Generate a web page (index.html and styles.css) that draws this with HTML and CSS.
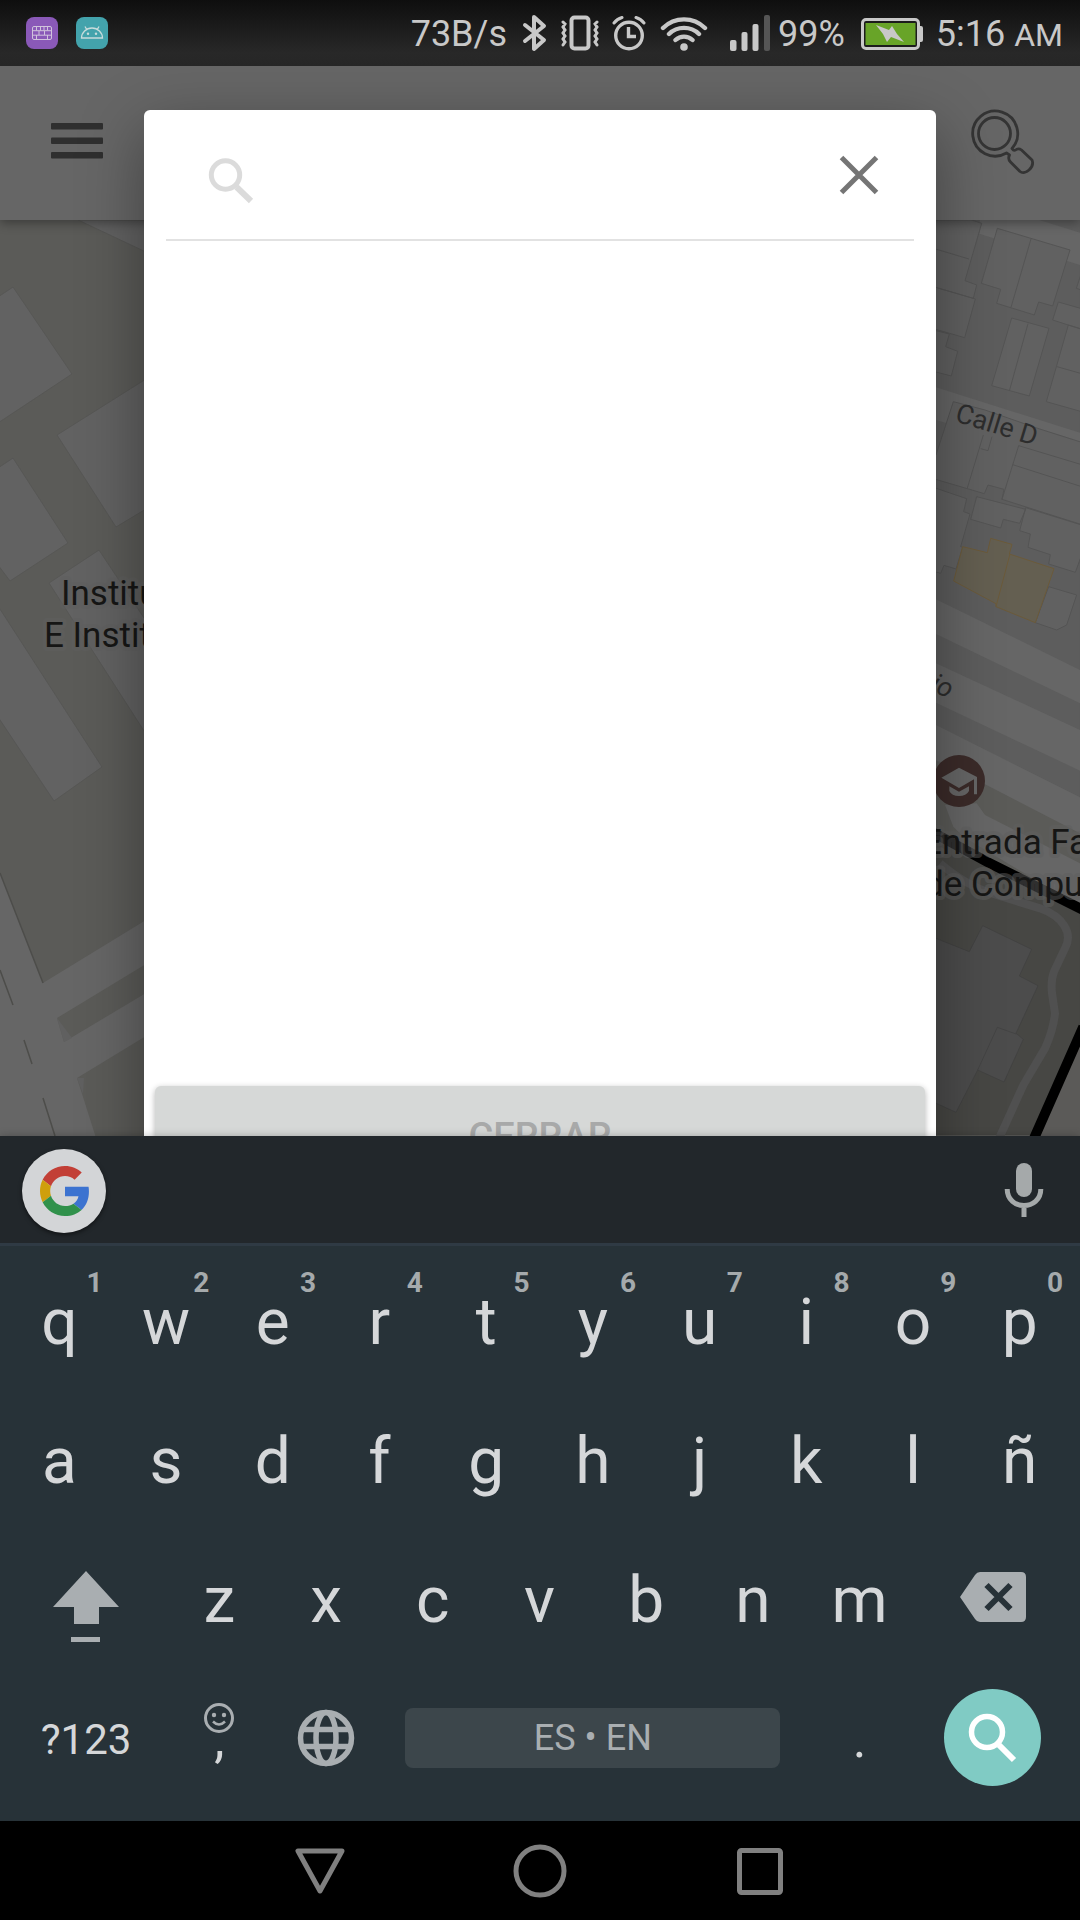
FILE: index.html
```html
<!DOCTYPE html>
<html lang="es">
<head>
<meta charset="utf-8">
<meta name="viewport" content="width=device-width, initial-scale=1">
<title>Buscar</title>
<link rel="stylesheet" href="styles.css">
</head>
<body>
<header class="status">
  <div class="status-apps">
    <svg width="32" height="32" viewBox="0 0 32 32"><rect width="32" height="32" rx="8" fill="#8a59b8"/><g fill="none" stroke="#d0c3dc" stroke-width="1"><rect x="6.500" y="9.500" width="19" height="13" rx="1.500"/><path d="M6.500 13.700h19M6.500 18.200h19M10.500 9.500v4M14.500 9.500v4M18 9.500v4M21.500 9.500v4M13 14v4M18.500 14v4M10.500 18v4M21.500 18v4"/></g></svg>
    <svg width="32" height="32" viewBox="0 0 32 32"><rect width="32" height="32" rx="8" fill="#43a3ac"/><path d="M5.500 21a10.500 10 0 0 1 21 0zM9 9.500l2 3.500M23 9.500l-2 3.500" fill="none" stroke="#c8dcdc" stroke-width="1.300"/><g fill="#c8dcdc"><circle cx="12" cy="16.800" r="1.200"/><circle cx="20" cy="16.800" r="1.200"/></g></svg>
  </div>
  <div class="status-info">
    <span>73B/s</span>
    <svg class="i-bt" width="26" height="38" viewBox="0 0 26 38" fill="none" stroke="#c8c8c8" stroke-width="4" stroke-linejoin="round" stroke-linecap="round"><path d="M3 11l19 15-10 9V3l10 9L3 27"/></svg>
    <svg class="i-vib" width="38" height="36" viewBox="0 0 38 36" fill="none" stroke="#c8c8c8" stroke-linecap="round"><rect x="10.500" y="2.500" width="17" height="31" rx="3" stroke-width="4"/><path stroke-width="3" d="M2 7l2 2-2 3 2 3-2 3 2 3-2 3 2 3-2 3M36 7l-2 2 2 3-2 3 2 3-2 3 2 3-2 3 2 3"/></svg>
    <svg class="i-alarm" width="34" height="36" viewBox="0 0 34 36" fill="none" stroke="#c8c8c8" stroke-linecap="round"><circle cx="17" cy="20.500" r="13.300" stroke-width="3.400"/><path stroke-width="3.400" stroke-linecap="butt" d="M16.500 12v9.500H24"/><path stroke-width="3" d="M2 8q3-4 8-5.500M32 8q-3-4-8-5.500"/></svg>
    <svg class="i-wifi" width="48" height="38" viewBox="0 0 48 38" fill="none" stroke="#c8c8c8" stroke-width="4.400" stroke-linecap="round"><path d="M3 14a30 30 0 0 1 42 0M9 20a21.500 21.500 0 0 1 30 0M15.500 26a12.500 12.500 0 0 1 17 0"/><circle cx="24" cy="33" r="3.800" fill="#c8c8c8" stroke="none"/></svg>
    <svg class="i-sig" width="40" height="36" viewBox="0 0 40 36" fill="#c8c8c8"><rect y="25" width="6.500" height="11" rx="2"/><rect x="11.500" y="17" width="6" height="19" rx="2"/><rect x="22.500" y="9" width="6" height="27" rx="2"/><rect x="34" width="6" height="36" rx="2" fill="#555"/></svg>
    <span>99%</span>
    <svg class="i-bat" width="62" height="32" viewBox="0 0 62 32"><rect x="1.500" y="1.500" width="56" height="29" rx="3.500" fill="#1c1c1c" stroke="#c8c8c8" stroke-width="3"/><path d="M58 8h2q2 0 2 2v12q0 2-2 2h-2z" fill="#c8c8c8"/><rect x="4.500" y="5" width="50" height="22" fill="#68a428"/><path d="M15 7l13 5 3-4 5 8 7 8-13-5-4 5-4-8z" fill="#c8c8c8"/></svg>
    <span>5:16 <span class="ampm">AM</span></span>
  </div>
</header>

<main class="app">
  <div class="toolbar">
    <button class="plain" aria-label="Menú"><svg width="52" height="36" viewBox="0 0 52 36" fill="#2f2f2f"><rect width="52" height="6.500" rx="1"/><rect y="14.500" width="52" height="6.500" rx="1"/><rect y="29" width="52" height="6.500" rx="1"/></svg></button>
    <button class="plain" aria-label="Buscar lugar"><svg width="66" height="66" viewBox="0 0 66 66" fill="none" stroke="#343434" stroke-width="2.800" stroke-linejoin="round"><circle cx="23.500" cy="25.500" r="16"/><path d="M41 40.500a22.500 22.500 0 1 0-5.500 4.500l3 2c-1 2-1 5 1 7l9.500 9.500c5 4 15-4 12-11.500L50.500 42c-2-1.500-4-1.500-6 0-2 1-2.500 0-3.500-1.500z"/></svg></button>
  </div>

  <svg class="map" viewBox="0 220 1080 916" preserveAspectRatio="xMidYMin slice">
    <rect y="220" width="1080" height="916" fill="#5b5b58"/>
    <g fill="#626262" stroke="#575755" stroke-width="1">
      <path d="M78 220h70v33z"/>
      <path d="M-2 297l15-10 59 87-74 49zM-2 468l15-10 55 85-58 38-12-16zM57 435l89-56v130l-30 18zM49 583l50-33 47 71v113zM-2 606l104 161-48 34-56-84z"/>
    </g>
    <path fill="#666" d="M0 873l43 110 103-63v44l-89 54 7 24 82-49v43l-69 42 19 60H0z"/>
    <path fill="#606060" d="M57 1018l15 20-8 4zM77 1078h7l-1 16z"/>
    <path d="M0 873l43 110M0 970l13 35M24 1040l8 24M43 1098l12 38" fill="none" stroke="#4d4d4a" stroke-width="1.500"/>

    <g transform="translate(920 210) scale(.33333)">
      <path fill="#5d5d5d" d="M40 0h440v1860L40 1650z"/>
      <g fill="#666">
        <path d="M180 30h178l122 38v97L178 71zM48 532l432 136v90L48 630z"/>
        <path d="M48 1168l432 212v100L48 1272zM48 1360l432 200v122L48 1478zM48 1545l432 217v108L200 1725 48 1650z"/>
        <path d="M75 1785l95-5 25 35 285 145v130L130 1880l-30-30z"/>
      </g>
      <g fill="#616161" stroke="#545454" stroke-width="3">
        <path d="M40 30h115l30 10-50 172 35 13-10 40L40 230zM40 115l107 32M40 230l126 37-32 116-94-27zM88 372l-11 38 36 14-19 74-54-14V360z"/>
        <path d="M232 55l218 65-52 168-42-12-13 39-113-35 12-42-58-18zM333 87l-60 205M484 190l-15 45 15 5M415 276l70 20v62l-87-28zM275 324l112 31-59 203-113-31zM324 341l-56 202M445 345l40 12v248l-106-30zM411 470l74 21"/>
        <path d="M100 575l95 25 158 55 132 42v247L246 868l6-30-48-13-11 26L40 806v-61l8-10zM190 675l-48 159M216 680l-12 42-22-6M296 707l-50 161"/>
        <path fill="none" d="M296 707l189 57M278 764l207 66"/>
        <path d="M40 832l100 34-9 39 19 7-28 98 6 2-20 65-36-11-10 24-22-6zM170 860l147 38-18 42-49-12-8 26-90-26zM317 893l168 52v90l-19 52-80-25 5-28-67-22 7-40-32-10zM386 1130l84 25-30 90-30 15-64-22z"/>
        <path fill="#645f51" stroke="#6b5a3a" d="M128 1010l74 18 10-43 64 18-8 29 134 44-56 162-118-48v-9l-127-68zM270 1032l-42 158"/>
      </g>
      <path fill="#474744" d="M40 1860l440 235v680H40z"/>
      <path fill="#5b5a58" d="M480 2460v330H340z"/>
      <path fill="none" stroke="#505050" stroke-width="24" d="M60 1960Q140 2030 230 2055L360 2095C430 2120 460 2170 435 2215L402 2285Q392 2310 396 2350L405 2410Q400 2460 375 2515L310 2625 235 2790"/>
      <path fill="#4c4c4c" stroke="#404040" stroke-width="2" d="M40 2182l108 43 40-78 147 71-37 80 56 29-66 143 22 18-58 128-79-36-65 127-68-31zM173 2580l59-128 56 20"/>
      <path d="M40 1868L200 1955l290 145M490 2450L340 2790" fill="none" stroke="#000" stroke-width="30"/>
      <circle cx="117" cy="1713" r="78" fill="#3b2b29"/>
      <g fill="#666"><path d="M64 1703l53-30 54 28v52h-9v-45l-45 26z"/><path d="M88 1729l29 16 30-16v14q-8 15-30 15t-29-15z"/></g>
    </g>

    <g class="place">
      <text x="61" y="605">Instituto</text>
      <text x="44" y="647">E Instituto</text>
      <text x="922" y="854">Entrada Fac</text>
      <text x="924" y="896">de Comput</text>
    </g>
    <g class="street">
      <text transform="translate(954 421) rotate(17)">Calle D</text>
      <text class="slant" transform="translate(929 690) rotate(24)">io</text>
    </g>
  </svg>

  <div class="overlay">
    <section class="dialog" role="dialog" aria-label="Buscar">
      <div class="search">
        <label for="q"><svg width="48" height="48" viewBox="0 0 48 48" fill="none" stroke="#dbdbdb" stroke-width="5"><circle cx="18.500" cy="18" r="14.200"/><path stroke-width="6" d="M29.500 30L44 44"/></svg></label>
        <input id="q" type="text" aria-label="Buscar">
        <button class="plain" aria-label="Borrar"><svg width="40" height="40" viewBox="0 0 40 40" fill="none" stroke="#757575" stroke-width="5"><path d="M2.500 2.500l35 35M37.500 2.500l-35 35"/></svg></button>
      </div>
      <button class="close">CERRAR</button>
    </section>
  </div>
</main>

<section class="keyboard" aria-label="Teclado">
  <div class="suggest">
    <button class="google" aria-label="Google"><svg width="50" height="50" viewBox="0 0 48 48"><path fill="#c23f36" d="M24 9.500c3.540 0 6.710 1.220 9.210 3.600l6.850-6.850C35.900 2.380 30.470 0 24 0 14.620 0 6.510 5.380 2.560 13.220l7.980 6.190C12.430 13.720 17.740 9.500 24 9.500z"/><path fill="#3c73d0" d="M46.980 24.550c0-1.570-.15-3.090-.38-4.550H24v9.020h12.940c-.58 2.960-2.260 5.480-4.780 7.180l7.730 6c4.510-4.180 7.090-10.360 7.090-17.650z"/><path fill="#cf9f0c" d="M10.530 28.590c-.48-1.450-.76-2.990-.76-4.590s.27-3.140.76-4.590l-7.980-6.190C.92 16.460 0 20.120 0 24c0 3.880.92 7.540 2.560 10.780l7.970-6.190z"/><path fill="#30914b" d="M24 48c6.480 0 11.930-2.130 15.890-5.810l-7.730-6c-2.150 1.450-4.920 2.300-8.160 2.300-6.260 0-11.570-4.220-13.470-9.910l-7.980 6.190C6.510 42.620 14.620 48 24 48z"/></svg></button>
    <button class="plain" aria-label="Voz"><svg width="40" height="54" viewBox="0 0 40 54"><rect x="12" width="16" height="34" rx="8" fill="#a5a9aa"/><path d="M3.200 26c0 22 33.600 22 33.600 0M20 43v11" fill="none" stroke="#a5a9aa" stroke-width="5"/></svg></button>
  </div>
  <div class="keys">
    <div class="row ten">
      <button>q<small>1</small></button><button>w<small>2</small></button><button>e<small>3</small></button><button>r<small>4</small></button><button>t<small>5</small></button><button>y<small>6</small></button><button>u<small>7</small></button><button>i<small>8</small></button><button>o<small>9</small></button><button>p<small>0</small></button>
    </div>
    <div class="row ten">
      <button>a</button><button>s</button><button>d</button><button>f</button><button>g</button><button>h</button><button>j</button><button>k</button><button>l</button><button>ñ</button>
    </div>
    <div class="row nine">
      <button class="shift" aria-label="Mayúsculas"><svg width="66" height="72" viewBox="0 0 66 72" fill="#a9aeb1"><path d="M33 0l33 36H46v17H21V36H0z"/><path d="M18 66h29v5H18z"/></svg></button>
      <button>z</button><button>x</button><button>c</button><button>v</button><button>b</button><button>n</button><button>m</button>
      <button class="erase" aria-label="Retroceso"><svg width="66" height="50" viewBox="0 0 66 50"><path d="M20 0h41q5 0 5 5v40q0 5-5 5H20q-3 0-5-3L0 25 15 3q2-3 5-3z" fill="#a9aeb1"/><path d="M26.500 13l24 24M50.500 13l-24 24" stroke="#273238" stroke-width="6"/></svg></button>
    </div>
    <div class="row six">
      <button class="sym">?123</button>
      <button class="punct">,<svg class="emoji" width="32" height="32" viewBox="0 0 32 32" fill="none" stroke="#a9aeb1"><circle cx="16" cy="16" r="13.500" stroke-width="3"/><path d="M10 19.500q6 6 12 0" stroke-width="2.500"/><g fill="#a9aeb1" stroke="none"><circle cx="11" cy="13" r="2.200"/><circle cx="21" cy="13" r="2.200"/></g></svg></button>
      <button class="raised" aria-label="Idioma"><svg width="58" height="58" viewBox="0 0 58 58" fill="none" stroke="#a9aeb1" stroke-width="5.500"><circle cx="29" cy="29" r="25.500"/><ellipse cx="29" cy="29" rx="10" ry="25.500"/><path d="M4 20.500h50M4 37.500h50"/></svg></button>
      <button class="space"><span>ES • EN</span></button>
      <button class="punct">.</button>
      <button class="raised" aria-label="Buscar ahora"><span class="enter"><svg width="50" height="50" viewBox="0 0 50 50" fill="none" stroke="#fff" stroke-width="5.500"><circle cx="19" cy="19" r="15.500"/><path stroke-width="6" d="M31 32l15 15"/></svg></span></button>
    </div>
  </div>
</section>

<nav class="nav">
  <button class="plain" aria-label="Atrás"><svg width="54" height="54" viewBox="0 0 54 54"><path d="M5 7h44L27 47z"/></svg></button>
  <button class="plain" aria-label="Inicio"><svg width="54" height="54" viewBox="0 0 54 54"><circle cx="27" cy="27" r="24"/></svg></button>
  <button class="plain" aria-label="Recientes"><svg width="54" height="54" viewBox="0 0 54 54"><rect x="6.500" y="6.500" width="41" height="42" rx="2"/></svg></button>
</nav>
</body>
</html>
```

FILE: styles.css
```css
* { box-sizing: border-box; }

body {
  margin: 0;
  min-height: 100vh;
  display: flex;
  flex-direction: column;
  background: #000;
  font-family: Roboto, "Noto Sans", sans-serif;
}

svg { display: block; flex: none; }

button {
  margin: 0;
  padding: 0;
  border: 0;
  background: none;
  color: inherit;
  font: inherit;
}

.plain { display: flex; }

/* Status bar */
.status {
  display: flex;
  justify-content: space-between;
  align-items: center;
  height: 66px;
  padding: 0 17px 0 26px;
  background: linear-gradient(#0e0e0e, #1b1b1b 40%, #282828 80%, #262626);
  color: #c8c8c8;
  font-size: 36px;
}

.status-apps { display: flex; gap: 18px; }
.status-info { display: flex; align-items: center; line-height: 66px; white-space: nowrap; }
.status-info > span { padding-top: 2px; }
.ampm { font-size: 32px; }
.i-bt { margin-left: 15px; }
.i-vib { margin-left: 13px; }
.i-alarm { margin-left: 13px; }
.i-wifi { margin-left: 14px; }
.i-sig { margin: 0 8px 0 22px; }
.i-bat { margin: 2px 13px 0 16px; }

/* App behind the dialog */
.app {
  position: relative;
  flex: 1;
  min-height: 400px;
  display: flex;
  flex-direction: column;
  overflow: hidden;
  background: #5b5b58;
}

.toolbar {
  position: relative;
  display: flex;
  justify-content: space-between;
  align-items: center;
  height: 154px;
  padding: 0 43px 4px 51px;
  background: #666;
  box-shadow: 0 3px 10px rgba(0, 0, 0, .35);
}

.map { width: 100%; flex: 1; min-height: 0; }
.place { font-size: 35px; fill: #161615; stroke: rgba(95, 95, 95, .5); stroke-width: 8px; stroke-linejoin: round; paint-order: stroke; }
.street { font-size: 27px; fill: #2d2d2d; }
.slant { font-style: italic; }

.overlay {
  position: absolute;
  inset: 0 0 -60px;
  display: flex;
  padding: 44px 144px 0;
}

.dialog {
  flex: 1;
  display: flex;
  flex-direction: column;
  padding: 0 11px 9px;
  border-radius: 6px;
  background: #fff;
  box-shadow: 0 20px 64px rgba(0, 0, 0, .38);
}

.search {
  display: flex;
  align-items: center;
  height: 131px;
  margin: 0 11px;
  padding: 0 35px 0 41px;
  border-bottom: 2px solid #e2e2e2;
}

.search label { padding-top: 12px; }

.search input {
  flex: 1;
  min-width: 0;
  height: 72px;
  padding: 0 16px;
  border: 0;
  outline: 0;
  background: none;
  color: #333;
  font: 36px Roboto, sans-serif;
}

.close {
  height: 101px;
  margin-top: auto;
  border-radius: 6px;
  background: #d6d8d7;
  box-shadow: 0 2px 6px rgba(0, 0, 0, .3);
  color: #a8a9a9;
  font-size: 38px;
  font-weight: 500;
}

/* Keyboard */
.keyboard {
  position: relative;
  background: #273238;
  color: #d5d7d9;
  box-shadow: 0 0 8px rgba(0, 0, 0, .25);
}

.suggest {
  display: flex;
  justify-content: space-between;
  align-items: center;
  height: 110px;
  padding: 0 36px 0 22px;
  background: #22272b;
  border-bottom: 3px solid #2f3a44;
}

.google {
  display: grid;
  place-items: center;
  width: 84px;
  height: 84px;
  margin-top: 2px;
  padding-left: 2px;
  border-radius: 50%;
  background: #d3d5d7;
  box-shadow: 0 2px 4px rgba(0, 0, 0, .5);
}

.keys { padding: 7px 7px 12px 6px; }
.row { display: grid; height: 139px; }
.ten { grid-template-columns: repeat(10, 1fr); }
.nine { grid-template-columns: 3fr repeat(7, 2fr) 3fr; }
.six { grid-template-columns: 3fr 2fr 2fr 8fr 2fr 3fr; }

.row button {
  position: relative;
  display: flex;
  justify-content: center;
  align-items: center;
  min-width: 0;
  font-size: 64px;
  line-height: 76px;
}

.row small {
  position: absolute;
  top: 14px;
  right: 10px;
  color: #a5aaac;
  font-size: 28px;
  font-weight: 700;
  line-height: 32px;
}

.row .shift { padding-top: 12px; }
.row .erase { padding-bottom: 8px; }
.row .raised { padding-bottom: 4px; }
.row .sym { font-size: 42px; }
.row .punct { font-size: 52px; }
.emoji { position: absolute; top: 32px; left: calc(50% - 16px); }

.row .space { padding: 0 26px 4px; color: #a9aeb1; font-size: 36px; }
.space span {
  flex: 1;
  border-radius: 8px;
  background: #3c464b;
  line-height: 60px;
}

.enter {
  display: grid;
  place-items: center;
  width: 97px;
  height: 97px;
  border-radius: 50%;
  background: #80cbc4;
}

/* System navigation */
.nav {
  display: flex;
  justify-content: center;
  align-items: center;
  gap: 166px;
  height: 99px;
  background: #000;
}

.nav svg { fill: none; stroke: #808080; stroke-width: 5; stroke-linejoin: round; }
```
